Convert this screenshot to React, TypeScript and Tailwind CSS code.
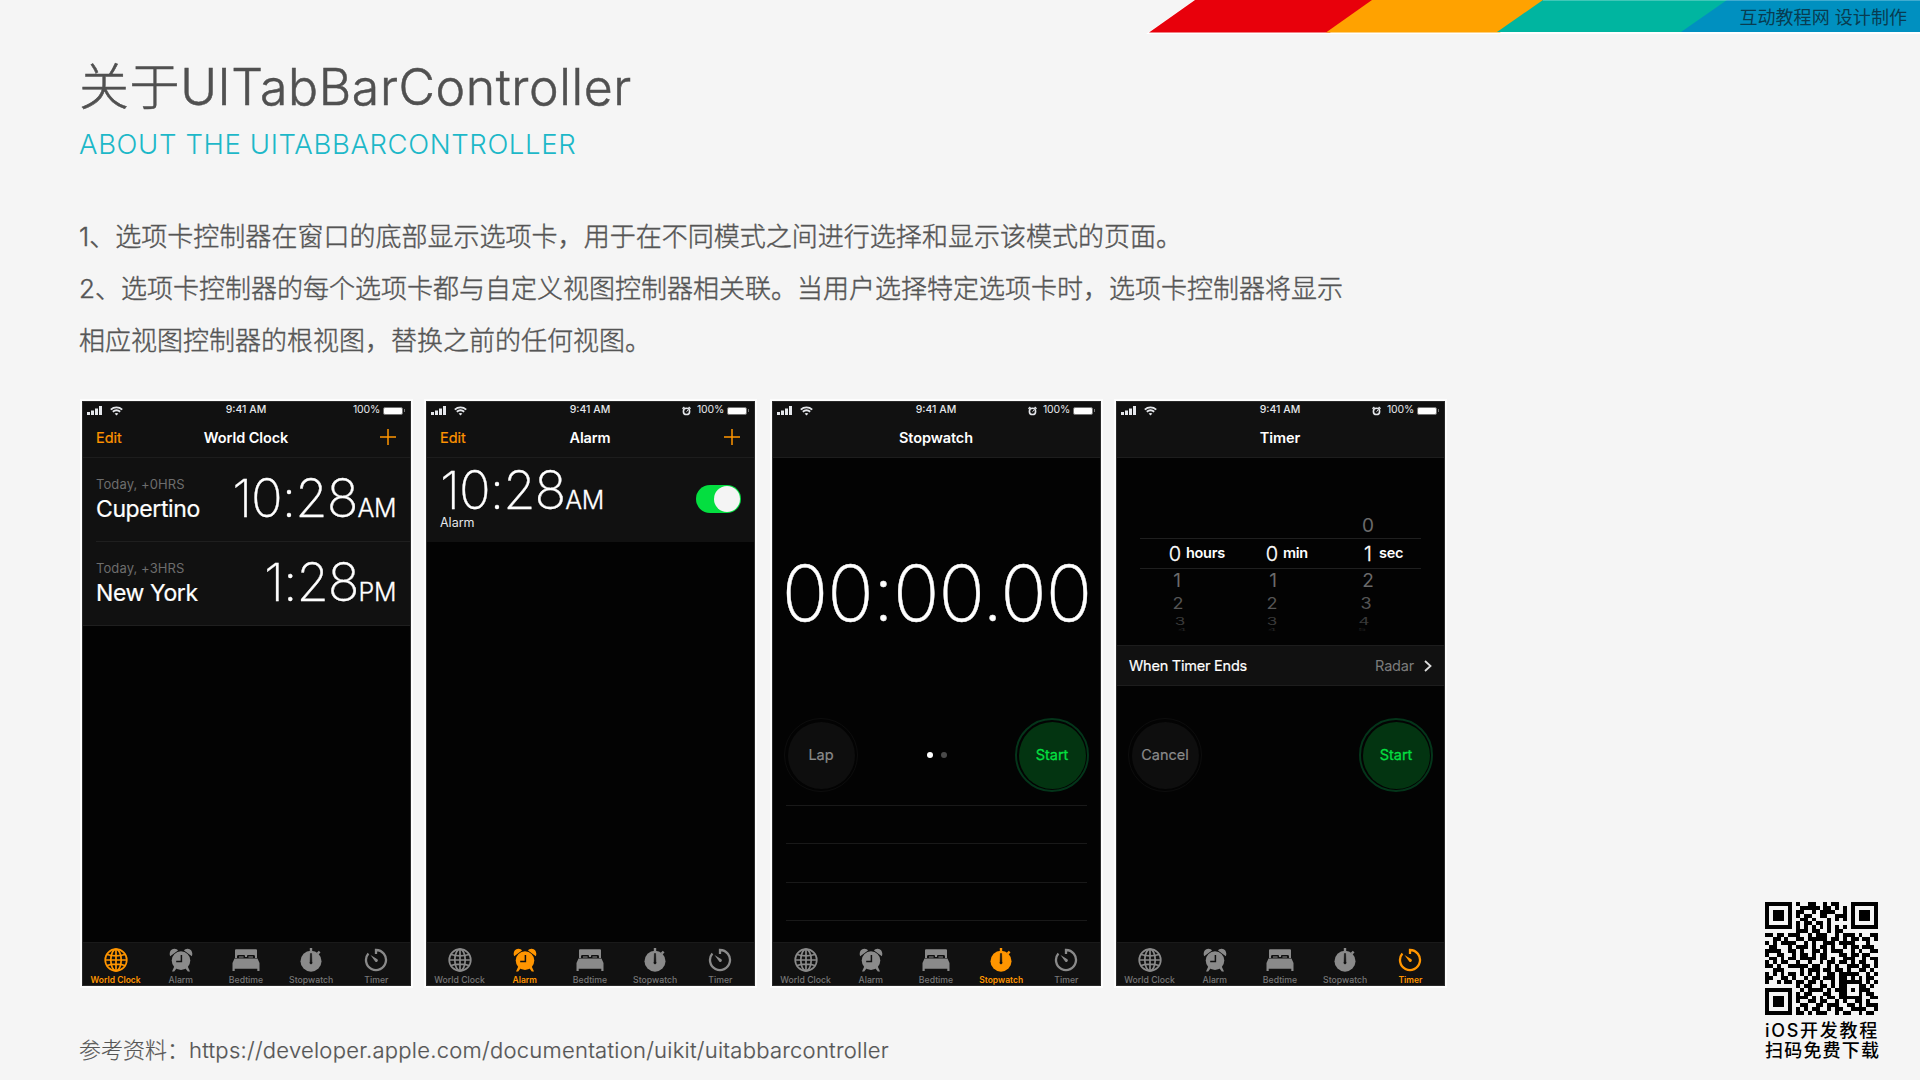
import type { ReactNode } from "react";

type Tab = "World Clock" | "Alarm" | "Bedtime" | "Stopwatch" | "Timer";

const GlobeIcon = () => (
  <svg width="24" height="24" viewBox="0 0 24 24" fill="none" stroke="currentColor" strokeWidth="1.7">
    <circle cx="12" cy="12" r="10.8" />
    <ellipse cx="12" cy="12" rx="5.2" ry="10.8" />
    <path d="M12 1.2v21.6M1.2 12h21.6M3 6.5c5.5 1.7 12.5 1.7 18 0M3 17.5c5.5-1.7 12.5-1.7 18 0" />
  </svg>
);

const AlarmIcon = ({ size = 24 }: { size?: number }) => (
  <svg width={size} height={size} viewBox="0 0 24 24" fill="currentColor">
    <path d="M1.2 8.2C-.3 5 1.5 1 5.2.8 7 .7 8.3 1.5 9 2.600zM22.800 8.200C24.300 5 22.500 1 18.800.8 17 .7 15.700 1.500 15 2.600z" />
    <circle cx="12" cy="12.600" r="9.300" />
    <path d="M5.500 18l2.300 2-2.600 3.600H3zM18.500 18l-2.300 2 2.600 3.600H21z" />
    <path d="M12.400 7v6.600H7.200" fill="none" stroke="#111" strokeWidth="1.500" />
  </svg>
);

const StatusAlarmIcon = () => (
  <svg width="9" height="10" viewBox="0 0 9 10" fill="none" stroke="currentColor">
    <circle cx="4.500" cy="5.400" r="3.100" strokeWidth="1.600" />
    <path d="M.4 2.800L2.400 1M8.600 2.800L6.600 1" strokeWidth="1.500" />
    <path d="M4.500 5.600L6 4.200" strokeWidth="1" />
  </svg>
);

const BedIcon = () => (
  <svg width="28" height="22" viewBox="0 0 28 22" fill="currentColor">
    <path d="M3 1.200Q3 .3 4 .3h20q1 0 1 .9V9h-2V7.400Q23 6 21.500 6H16q-1 0-1 1v1h-2V7q0-1-1-1H6.500Q5 6 5 7.400V9H3z" />
    <path d="M7 7h4.600v2H7zM16.400 7H21v2h-4.600z" opacity=".5" />
    <path d="M2.500 9.500h23L27.500 14H.5zM.5 14h27v8h-2.200v-2.300H2.700V22H.5z" />
  </svg>
);

const StopwatchIcon = () => (
  <svg width="24" height="24" viewBox="0 0 24 24" fill="currentColor">
    <path d="M10.800 0h2.400v4h-2.400zM19.800 2.800l1.700 1.700-2 2-1.700-1.700z" />
    <circle cx="12" cy="13.200" r="10.500" />
    <path d="M11.400 5.500h1.200l.3 8.500a1.200 1.200 0 1 1-1.800 0z" fill="#111" stroke="#111" strokeWidth=".5" />
  </svg>
);

const TimerIcon = () => (
  <svg width="24" height="24" viewBox="0 0 24 24" fill="none" stroke="currentColor" strokeWidth="2.300">
    <path d="M12 6V2a10 10 0 1 1-7.600 3.500" />
    <path d="M6.500 7l6.900 4.200a1.500 1.500 0 1 1-2.200 2.200z" fill="currentColor" stroke="none" />
  </svg>
);

const tabs: { name: Tab; icon: ReactNode }[] = [
  { name: "World Clock", icon: <GlobeIcon /> },
  { name: "Alarm", icon: <AlarmIcon /> },
  { name: "Bedtime", icon: <BedIcon /> },
  { name: "Stopwatch", icon: <StopwatchIcon /> },
  { name: "Timer", icon: <TimerIcon /> },
];

function StatusBar({ alarm }: { alarm: boolean }) {
  return (
    <div className="grid h-[17px] grid-cols-3 items-center pr-[5px] pl-[4px] text-[10.5px] leading-none text-gray-200">
      <div className="flex items-center gap-2">
        <svg width="15" height="9" viewBox="0 0 15 9" fill="currentColor">
          <path d="M0 6h3v3H0zM4 4.500h3V9H4zM8 2.500h3V9H8zM12 0h3v9h-3z" />
        </svg>
        <svg width="13" height="10" viewBox="0 0 13 10" fill="none" stroke="currentColor" strokeWidth="1.900">
          <path d="M.8 3.600c3.300-3 8.100-3 11.400 0M2.800 5.800c2.200-1.900 5.200-1.900 7.400 0" />
          <path d="M4.600 7.600c1.200-.9 2.600-.9 3.800 0L6.500 9.600z" fill="currentColor" stroke="none" />
        </svg>
      </div>
      <div className="text-center font-medium">9:41 AM</div>
      <div className="flex items-center justify-end">
        {alarm && (
          <span className="mr-[6px]">
            <StatusAlarmIcon />
          </span>
        )}
        <span className="mr-[3px] tracking-[-0.2px]">100%</span>
        <span className="h-[8px] w-[20px] rounded-[2px] border border-neutral-500 bg-white" />
        <span className="ml-px h-[3px] w-px bg-neutral-500" />
      </div>
    </div>
  );
}

function Phone({ tab, editable = false, children }: { tab: Tab; editable?: boolean; children: ReactNode }) {
  return (
    <div className="flex h-[585px] w-[329px] flex-col border border-[#2a2a2a] bg-[#030303] font-[Inter] text-white shadow-[0_0_0_2px_rgba(255,255,255,0.75)]">
      <div className="h-[56px] shrink-0 border-b border-[#1d1d1d] bg-[#111]">
        <StatusBar alarm={tab !== "World Clock"} />
        <div className="grid h-[38px] grid-cols-3 items-center pr-[14px] pl-[13px] text-[14.5px] leading-none">
          <span className="text-[#ff9500] [-webkit-text-stroke:0.2px]">{editable && "Edit"}</span>
          <span className="text-center font-semibold tracking-[-0.1px] whitespace-nowrap">{tab}</span>
          {editable && (
            <svg className="mb-[2px] justify-self-end text-[#ff9500]" width="16" height="16" viewBox="0 0 16 16" stroke="currentColor" strokeWidth="1.500">
              <path d="M8 0v16M0 8h16" />
            </svg>
          )}
        </div>
      </div>
      <div className="flex min-h-0 flex-1 flex-col">{children}</div>
      <div className="grid h-[43px] shrink-0 grid-cols-5 border-t border-[#1a1a1a] bg-[#111] pr-px">
        {tabs.map(({ name, icon }) => (
          <div key={name} className={name === tab ? "flex flex-col items-center text-[#ff9500]" : "flex flex-col items-center text-[#8a8a8a]"}>
            <span className="flex h-[33px] items-center">{icon}</span>
            <span className={name === tab ? "text-[8.5px] leading-[8px] font-semibold whitespace-nowrap" : "text-[8.7px] leading-[8px] font-medium whitespace-nowrap text-[#777]"}>
              {name}
            </span>
          </div>
        ))}
      </div>
    </div>
  );
}

function Time({ value, suffix }: { value: string; suffix: string }) {
  return (
    <div className="flex items-baseline leading-none">
      <span className="text-[52.5px] leading-none font-extralight tracking-[-1px] [-webkit-text-stroke:0.3px]">{value}</span>
      <span className="text-[25px] leading-none font-light tracking-[-0.4px] [-webkit-text-stroke:0.3px]">{suffix}</span>
    </div>
  );
}

function CityRow({ offset, city, time, suffix, inset }: { offset: string; city: string; time: string; suffix: string; inset: boolean }) {
  return (
    <div className="bg-[#111] pl-[13px]">
      <div className={inset ? "flex h-[84px] items-center justify-between border-b border-[#1f1f1f] pr-[14px] pb-[2px]" : "flex h-[83px] items-center justify-between pr-[14px] pb-[2px]"}>
        <div className="pb-[2px]">
          <div className="text-[13px] leading-[18px] tracking-[0.1px] text-[#6d6d6d]">{offset}</div>
          <div className="mt-1 text-[23px] leading-6 tracking-[-0.4px] [-webkit-text-stroke:0.2px]">{city}</div>
        </div>
        <Time value={time} suffix={suffix} />
      </div>
    </div>
  );
}

function RoundButton({ label, go = false }: { label: string; go?: boolean }) {
  return (
    <div className={go ? "grid size-[74px] place-items-center rounded-full border-2 border-[#04351a] text-[#04de40]" : "grid size-[74px] place-items-center rounded-full border border-[#0d0d0d] text-[#8a8a8a]"}>
      <div className={go ? "grid size-[67px] place-items-center rounded-full bg-[#033411] text-[14.5px] [-webkit-text-stroke:0.3px]" : "grid size-[67px] place-items-center rounded-full bg-[#0e0e0e] text-[14.5px] [-webkit-text-stroke:0.2px]"}>
        {label}
      </div>
    </div>
  );
}

const wheel = [
  { row: "h-[25px]", values: ["1", "1", "2"], digit: "text-[19px] text-[#6a6a6a]", shift: ["translate-x-[2px]", "translate-x-px", ""] },
  { row: "h-[22px]", values: ["2", "2", "3"], digit: "text-[18px] scale-y-[0.85] text-[#555]", shift: ["translate-x-[3px]", "", "-translate-x-[2px]"] },
  { row: "h-[13px]", values: ["3", "3", "4"], digit: "text-[17px] scale-y-[0.6] text-[#3a3a3a]", shift: ["translate-x-[5px]", "", "-translate-x-[4px]"] },
  { row: "h-[4px]", values: ["4", "4", "5"], digit: "text-[14px] scale-y-[0.25] text-[#222]", shift: ["translate-x-[7px]", "", "-translate-x-[6px]"] },
];

const units = [
  { value: "0", unit: "hours" },
  { value: "0", unit: "min" },
  { value: "1", unit: "sec" },
];

function TimerPicker() {
  return (
    <div className="h-[187px] leading-none">
      <div className="mt-[55px] grid h-[25px] grid-cols-[97px_96px_1fr] items-center pl-[47px]">
        <span className="col-start-3 w-[22px] text-center text-[19px] text-[#6a6a6a]">0</span>
      </div>
      <div className="mx-[23px] grid h-[31px] grid-cols-[97px_96px_1fr] items-center border-y border-[#1f1f1f] pl-[24px]">
        {units.map(({ value, unit }) => (
          <div key={unit} className="flex items-center">
            <span className="w-[22px] text-center text-[20px] font-light [-webkit-text-stroke:0.3px]">{value}</span>
            <span className="text-[14.5px] font-semibold tracking-[-0.3px]">{unit}</span>
          </div>
        ))}
      </div>
      <div className="-mt-px">
        {wheel.map(({ row, values, digit, shift }) => (
          <div key={row} className={`grid grid-cols-[97px_96px_1fr] content-center items-center pl-[47px] ${row}`}>
            {values.map((value, i) => (
              <span key={i} className={`w-[22px] text-center leading-none ${shift[i]}`}>
                <span className={`block leading-none ${digit}`}>{value}</span>
              </span>
            ))}
          </div>
        ))}
      </div>
    </div>
  );
}

const qrRows = [
  "#######.#..##..#.##...#######",
  "#.....#..#####.##.#.#.#.....#",
  "#.###.#.##..#.####..#.#.###.#",
  "#.###.#.#.##..##..###.#.###.#",
  "#.###.#..##.#...#.#.#.#.###.#",
  "#.....#.#.##.##.#.....#.....#",
  "#######.#.#.#.#.#.#.#.#######",
  "........###.##..#.##.........",
  "##.##.###..#.###..#.###.#..##",
  "..##.#..##.#####.##.#.##.##.#",
  "#.#.####..#.#..###.####...#..",
  ".##...#.###.#.##.#..#.##.###.",
  "####..##.#..##.#.###..#.#..##",
  "#..##..#.##.#.##...##.##.##..",
  ".##.#.##.####.##.#..###..#.##",
  "#.#.##..#..#..#.##.##.#.##..#",
  "##.#..#####.##..#.#..###.##.#",
  "..###....#.###.##.##.#..##.#.",
  "#.#.#.##.#.#.#..##.#####..#.#",
  "##..##.#..#.##.###.##.#.#.##.",
  "#..#.##.##.##.#..#.######.#.#",
  "........#.##..##.#.##...##.#.",
  "#######..#.####.#.###.#.###..",
  "#.....#.#.##...##..##...#.##.",
  "#.###.#.###.#.#.##.######..##",
  "#.###.#.#..##.##..#.#..##.#..",
  "#.###.#..##..##.###..##.#.###",
  "#.....#.#.#.##..#.##..####..#",
  "#######.##.#.###..#.##..#.##.",
];

const qrPath = qrRows
  .flatMap((row, y) => [...row].map((cell, x) => (cell === "#" ? `M${x} ${y}h1v1h-1z` : "")))
  .join("");

export default function App() {
  return (
    <div className="flex h-[1080px] w-[1920px] flex-col overflow-hidden bg-[#f5f5f5] font-[Inter,'Noto_Sans_CJK_SC',sans-serif] text-[#555]">
      <header className="flex h-[34px] shrink-0 justify-end">
        <div className="grid h-[34px] w-[774px]">
          <svg className="col-start-1 row-start-1" width="774" height="34" viewBox="0 0 774 34">
            <path d="M0 34L48 0H774V34z" fill="#fff" />
            <path d="M3 32.500L49 0H230L184 32.500z" fill="#e8000b" />
            <path d="M180 32.500L226 0H400L354 32.500z" fill="#ffa200" />
            <path d="M351 32L397 0H584L538 32z" fill="#00b5a0" />
            <path d="M535 32L581 0H774V32z" fill="#0090c0" />
            <path d="M397 .5H774" stroke="#fff" strokeOpacity=".25" />
          </svg>
          <div className="col-start-1 row-start-1 self-center justify-self-end pt-px pr-[13px] text-[18px] leading-none tracking-[0.05px] text-[#083c50]">
            互动教程网 设计制作
          </div>
        </div>
      </header>

      <div className="flex min-h-0 flex-1 justify-between">
        <main className="pl-[79px]">
          <h1 className="mt-[25px] h-[56px] text-[50px] leading-[56px] font-light tracking-[0.6px] text-[#505050] [-webkit-text-stroke:0.5px]">
            关于UITabBarController
          </h1>
          <h2 className="mt-[13px] h-[32px] text-[27.5px] leading-8 font-light tracking-[0.62px] text-[#1db8c8]">
            ABOUT THE UITABBARCONTROLLER
          </h2>
          <div className="mt-[51px] text-[26px] leading-[52px] font-light [-webkit-text-stroke:0.4px]">
            <p className="tracking-[0.02px]">1、选项卡控制器在窗口的底部显示选项卡，用于在不同模式之间进行选择和显示该模式的页面。</p>
            <p>
              2、选项卡控制器的每个选项卡都与自定义视图控制器相关联。当用户选择特定选项卡时，选项卡控制器将显示
              <br />
              相应视图控制器的根视图，替换之前的任何视图。
            </p>
          </div>

          <div className="mt-[34px] ml-[3px] flex">
            <Phone tab="World Clock" editable>
              <CityRow offset="Today, +0HRS" city="Cupertino" time="10:28" suffix="AM" inset />
              <CityRow offset="Today, +3HRS" city="New York" time="1:28" suffix="PM" inset={false} />
              <div className="h-px bg-[#1f1f1f]" />
            </Phone>
            <div className="ml-[15px]">
              <Phone tab="Alarm" editable>
                <div className="flex h-[84px] items-center justify-between bg-[#111] pr-[13px] pl-[13px]">
                  <div className="pb-[6px]">
                    <Time value="10:28" suffix="AM" />
                    <div className="-mt-px text-[12.5px] leading-[14px] text-gray-200">Alarm</div>
                  </div>
                  <div className="mb-[2px] flex h-[28px] w-[45px] items-center justify-end rounded-full bg-[#04de40] pr-px">
                    <span className="size-[26px] rounded-full bg-[#f4f4f4]" />
                  </div>
                </div>
              </Phone>
            </div>
            <div className="ml-[17px]">
              <Phone tab="Stopwatch">
                <div className="flex h-[260px] items-center justify-center pt-[11px] text-[77px] leading-none font-extralight tracking-[-1px] whitespace-nowrap [-webkit-text-stroke:0.4px]">
                  00:00.00
                </div>
                <div className="flex items-center justify-between px-[11px]">
                  <RoundButton label="Lap" />
                  <div className="flex gap-2">
                    <span className="size-[6px] rounded-full bg-white" />
                    <span className="size-[6px] rounded-full bg-[#4a4a4a]" />
                  </div>
                  <RoundButton label="Start" go />
                </div>
                <div className="mx-[13px] mt-[13px] flex flex-col gap-[37.3px]">
                  <span className="h-px bg-[#191919]" />
                  <span className="h-px bg-[#191919]" />
                  <span className="h-px bg-[#191919]" />
                  <span className="h-px bg-[#191919]" />
                </div>
              </Phone>
            </div>
            <div className="ml-[15px]">
              <Phone tab="Timer">
                <TimerPicker />
                <div className="flex h-[41px] items-center justify-between border-y border-[#1d1d1d] bg-[#111] pr-[12px] pl-[12px] text-[14.5px]">
                  <span className="tracking-[-0.22px] [-webkit-text-stroke:0.2px]">When Timer Ends</span>
                  <span className="flex items-center gap-[10px] tracking-[-0.2px] text-[#7c7c7c]">
                    Radar
                    <svg width="8" height="12" viewBox="0 0 8 12" fill="none" stroke="#ddd" strokeWidth="1.800">
                      <path d="M1 1l5.500 5L1 11" />
                    </svg>
                  </span>
                </div>
                <div className="mt-[32px] flex items-center justify-between px-[11px]">
                  <RoundButton label="Cancel" />
                  <RoundButton label="Start" go />
                </div>
              </Phone>
            </div>
          </div>

          <p className="mt-[52px] text-[22px] leading-6 font-light [-webkit-text-stroke:0.2px]">
            参考资料：<span className="tracking-[0.26px]">https://developer.apple.com/documentation/uikit/uitabbarcontroller</span>
          </p>
        </main>

        <aside className="flex w-[155px] flex-col justify-end pb-[19px] text-black">
          <svg className="mt-px" width="113" height="113" viewBox="0 0 29 29" shapeRendering="crispEdges">
            <path d={qrPath} />
          </svg>
          <div className="mt-[6px] text-[18px] leading-[20px] font-medium">
            <div className="tracking-[1.7px]">iOS开发教程</div>
            <div className="tracking-[1.2px]">扫码免费下载</div>
          </div>
        </aside>
      </div>
    </div>
  );
}
